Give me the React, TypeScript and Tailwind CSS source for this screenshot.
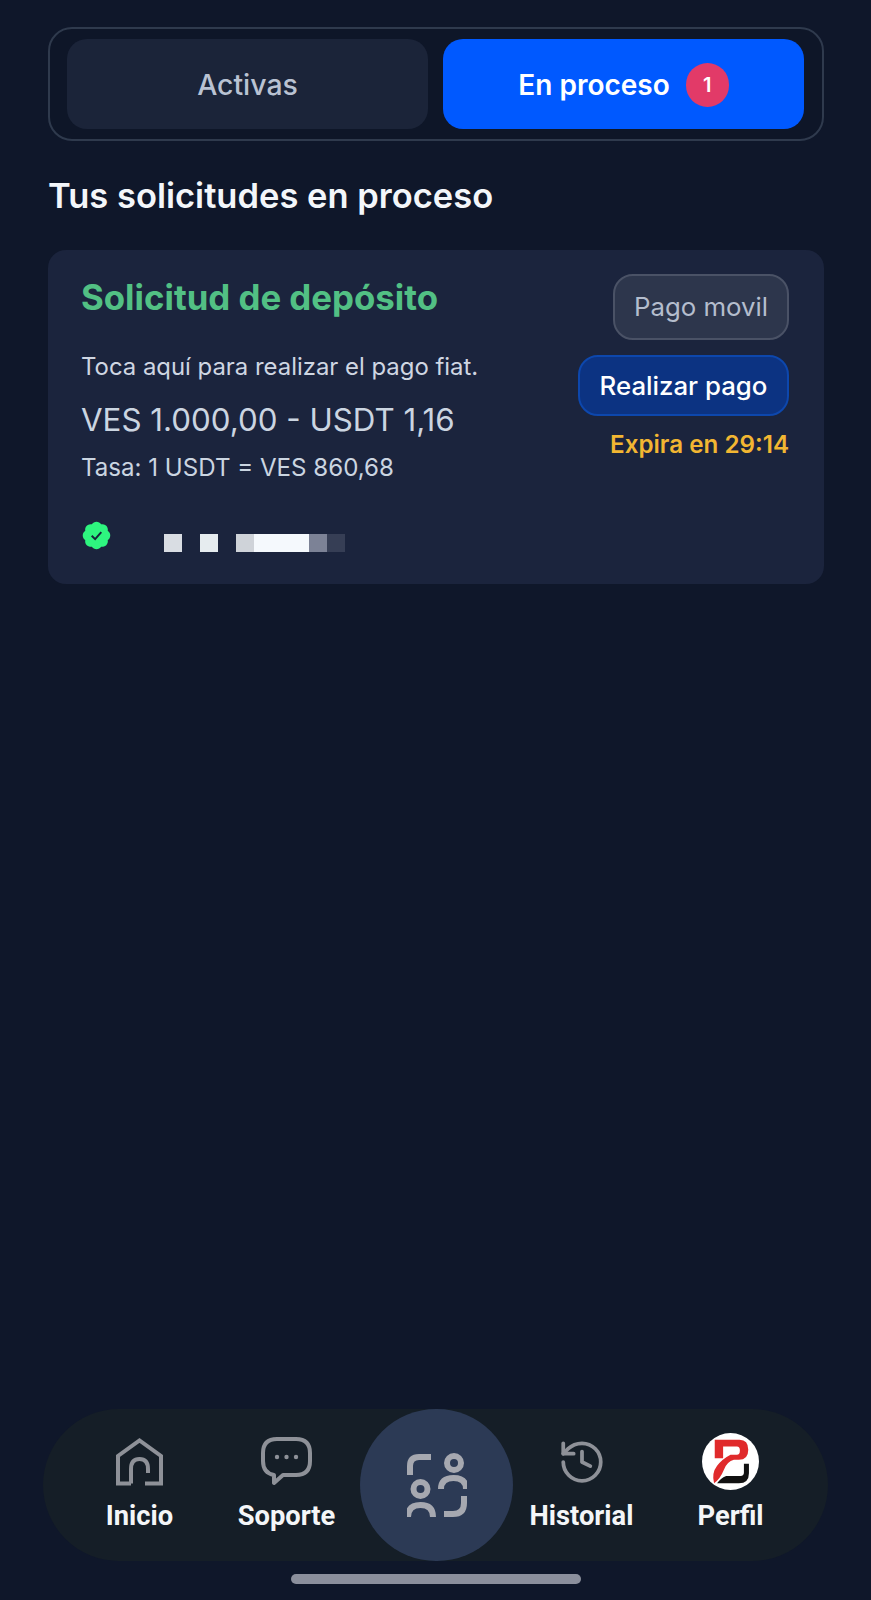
import { History } from "lucide-react";

function HomeIcon() {
  return (
    <svg width="47" height="48" viewBox="0 0 47 48" fill="none" stroke="#8e9198" strokeWidth="4">
      <path d="M15 45.500H2V18L23.500 2.500 45 18V45.500H29" />
      <path d="M15 45.500V31Q15 21 23.500 21 32 21 32 31V35" />
    </svg>
  );
}

function ChatIcon() {
  return (
    <svg width="51" height="49" viewBox="0 0 51 49" fill="none">
      <path
        d="M16 2H35Q49 2 49 16V24Q49 38 35 38H22L13 46V38Q2 36 2 24V16Q2 2 16 2Z"
        stroke="#8e9198"
        strokeWidth="4"
        strokeLinejoin="round"
      />
      <circle cx="16" cy="20" r="2.2" fill="#8e9198" />
      <circle cx="25.5" cy="20" r="2.2" fill="#8e9198" />
      <circle cx="35" cy="20" r="2.2" fill="#8e9198" />
    </svg>
  );
}

function ScanIcon() {
  return (
    <svg width="60" height="64" viewBox="0 0 60 64" fill="none" stroke="#a6a8b0" strokeWidth="6">
      <path d="M3 22V13Q3 4 12 4H24" />
      <circle cx="47" cy="10" r="7" />
      <path d="M34 36Q34 25 46.500 25 59 25 59 36" />
      <circle cx="13.500" cy="36" r="7" />
      <path d="M1 64Q1 52 13.500 52 26 52 26 64" />
      <path d="M37 61H46Q57 61 57 50V43" />
    </svg>
  );
}

function LogoIcon() {
  return (
    <svg width="57" height="57" viewBox="0 0 170 170">
      <circle cx="85" cy="85" r="85" fill="#ffffff" />
      <path
        fill="#e02a2b"
        d="M38 20H112Q138 20 138 50 138 80 110 80H95Q75 85 65 110 55 135 36 150 28 120 45 98 60 78 85 65H104Q113 65 113 52 113 40 104 40H63V75H38Z"
      />
      <path fill="#111111" d="M45 150Q55 135 72 128H115Q125 128 125 118V92H140V120Q140 150 110 150Z" />
    </svg>
  );
}

function VerifiedBadge() {
  return (
    <svg className="-mt-[3px] -ml-[1px]" width="33" height="33" viewBox="0 0 24 24" fill="none">
      <path
        fill="#2ef57f"
        d="M3.850 8.620a4 4 0 0 1 4.780-4.770 4 4 0 0 1 6.740 0 4 4 0 0 1 4.780 4.780 4 4 0 0 1 0 6.740 4 4 0 0 1-4.770 4.780 4 4 0 0 1-6.750 0 4 4 0 0 1-4.780-4.770 4 4 0 0 1 0-6.760Z"
      />
      <path d="m8.500 12.200 2.500 2.500 4.500-5.200" stroke="#16233a" strokeWidth="1.400" />
    </svg>
  );
}

function NavItem({ label, icon }: { label: string; icon: React.ReactNode }) {
  return (
    <div className="flex w-[147px] flex-col items-center">
      <div className="flex h-[57px] items-center justify-center">{icon}</div>
      <span className="mt-[8px] text-[27.3px] leading-[36px] font-bold text-[#f4f6f8] [font-family:Roboto,sans-serif]">
        {label}
      </span>
    </div>
  );
}

export default function App() {
  return (
    <div className="flex h-[1600px] flex-col overflow-hidden bg-[#0f172a] [font-family:Inter,sans-serif]">
      <div className="pt-[27px] pr-[47px] pl-12">
        <div className="flex h-[114px] gap-[15px] rounded-[24px] border-2 border-[#2f3a4d] bg-[#0e1628] pt-[10px] pr-[18px] pb-[10px] pl-[17px]">
          <div className="flex h-[90px] flex-1 items-center justify-center rounded-[20px] bg-[#1b2439] pt-[3px] text-[28.4px] font-medium text-[#b9c2d2]">
            Activas
          </div>
          <div className="flex h-[90px] flex-1 items-center justify-center gap-4 rounded-[20px] bg-[#0059ff] pt-[2px] text-[28px] font-semibold text-white">
            En proceso
            <span className="flex h-[44px] w-[43px] items-center justify-center rounded-full bg-[#e23a68] text-[20px] font-semibold text-white">
              1
            </span>
          </div>
        </div>

        <h1 className="mt-[35px] text-[34.5px] leading-[40px] font-semibold text-[#f3f6fa]">
          Tus solicitudes en proceso
        </h1>

        <div className="mt-[34px] flex justify-between rounded-[18px] bg-[#1b243d] pr-[35px] pl-[33px]">
          <div className="pt-[27px] pb-[32px]">
            <h2 className="text-[34.8px] leading-[40px] font-bold text-[#52c084]">Solicitud de depósito</h2>
            <p className="mt-[34px] text-[23.9px] leading-[32px] text-[#cfd6e2]">
              Toca aquí para realizar el pago fiat.
            </p>
            <p className="mt-[19px] text-[31.3px] leading-[36px] text-[#cbd5e1]">VES 1.000,00 - USDT 1,16</p>
            <p className="mt-[14px] text-[24.1px] leading-[32px] text-[#cbd5e1]">Tasa: 1 USDT = VES 860,68</p>
            <div className="mt-[38px] flex items-start">
              <VerifiedBadge />
              <div className="mt-[12px] ml-[51px] flex">
                <div className="h-[18px] w-[18px] bg-[#d9dde3]" />
                <div className="ml-[18px] h-[18px] w-[18px] bg-[#e6ecef]" />
                <div className="ml-[18px] h-[18px] w-[18px] bg-[#cfd3d9]" />
                <div className="h-[18px] w-[55px] bg-[#f5f9fd]" />
                <div className="h-[18px] w-[18px] bg-[#7c8296]" />
                <div className="h-[18px] w-[18px] bg-[#363e55]" />
              </div>
            </div>
          </div>

          <div className="flex flex-col items-end pt-6">
            <div className="flex h-[66px] w-[176px] items-center justify-center rounded-[20px] border-2 border-[#4a5266] bg-[#2d364c] pt-[1px] text-[25.800px] text-[#b4bdcd]">
              Pago movil
            </div>
            <div className="mt-[15px] flex h-[61px] w-[211px] items-center justify-center rounded-[20px] border-2 border-[#0d47ad] bg-[#0c3382] pt-[2px] text-[25.800px] font-medium text-white">
              Realizar pago
            </div>
            <p className="mt-[13px] text-[24.2px] leading-[32px] font-semibold text-[#f2b632]">Expira en 29:14</p>
          </div>
        </div>
      </div>

      <div className="mt-auto px-[43px]">
        <div className="flex h-[152px] items-start rounded-full bg-[#151e27] pl-[23px]">
          <div className="flex items-start pt-[24px]">
            <NavItem label="Inicio" icon={<HomeIcon />} />
            <NavItem label="Soporte" icon={<ChatIcon />} />
          </div>
          <div className="flex h-[152px] w-[153px] shrink-0 items-center justify-center rounded-full bg-[#2c3a55]">
            <ScanIcon />
          </div>
          <div className="-ml-[5px] flex items-start gap-[2px] pt-[24px]">
            <NavItem label="Historial" icon={<History size={50} color="#8e9198" strokeWidth={1.8} />} />
            <NavItem label="Perfil" icon={<LogoIcon />} />
          </div>
        </div>
      </div>
      <div className="flex justify-center pt-[13px] pb-[16px]">
        <div className="h-[10px] w-[290px] rounded-full bg-[#8b8f9c]" />
      </div>
    </div>
  );
}
